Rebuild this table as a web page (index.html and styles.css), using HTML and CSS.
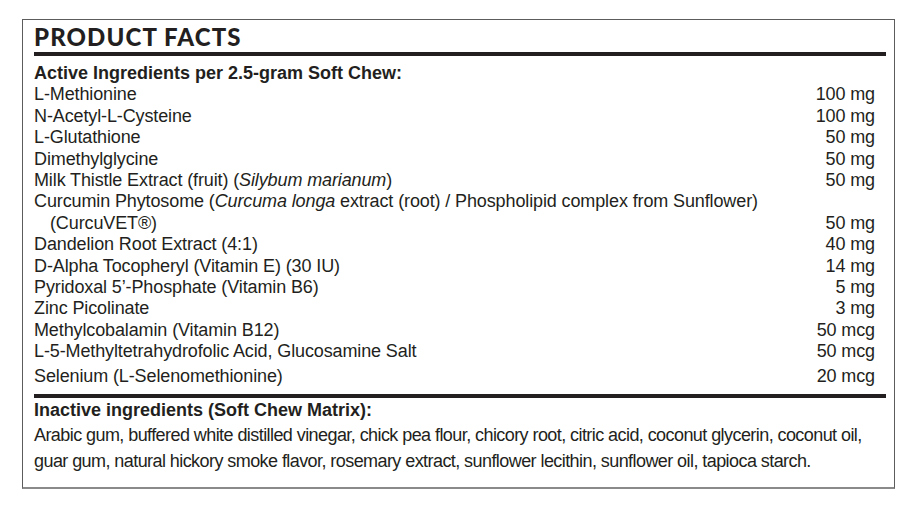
FILE: index.html
```html
<!DOCTYPE html>
<html lang="en">
<head>
<meta charset="utf-8">
<title>Product Facts</title>
<link rel="stylesheet" href="styles.css">
</head>
<body>
<div class="facts">
  <h1 class="facts-title">PRODUCT FACTS</h1>
  <section class="active">
    <h2 class="section-head">Active Ingredients per 2.5-gram Soft Chew:</h2>
    <ul class="ing-list">
      <li class="ing"><span class="name">L-Methionine</span><span class="amt">100 mg</span></li>
      <li class="ing"><span class="name">N-Acetyl-L-Cysteine</span><span class="amt">100 mg</span></li>
      <li class="ing"><span class="name">L-Glutathione</span><span class="amt">50 mg</span></li>
      <li class="ing"><span class="name">Dimethylglycine</span><span class="amt">50 mg</span></li>
      <li class="ing"><span class="name">Milk Thistle Extract (fruit) (<i>Silybum marianum</i>)</span><span class="amt">50 mg</span></li>
      <li class="ing"><span class="name wrap">Curcumin Phytosome (<i>Curcuma longa</i> extract (root) / Phospholipid complex from Sunflower)<br>(CurcuVET®)</span><span class="amt">50 mg</span></li>
      <li class="ing"><span class="name">Dandelion Root Extract (4:1)</span><span class="amt">40 mg</span></li>
      <li class="ing"><span class="name">D-Alpha Tocopheryl (Vitamin E) (30 IU)</span><span class="amt">14 mg</span></li>
      <li class="ing"><span class="name">Pyridoxal 5’-Phosphate (Vitamin B6)</span><span class="amt">5 mg</span></li>
      <li class="ing"><span class="name">Zinc Picolinate</span><span class="amt">3 mg</span></li>
      <li class="ing"><span class="name">Methylcobalamin (Vitamin B12)</span><span class="amt">50 mcg</span></li>
      <li class="ing"><span class="name">L-5-Methyltetrahydrofolic Acid, Glucosamine Salt</span><span class="amt">50 mcg</span></li>
      <li class="ing ing-last"><span class="name">Selenium (L-Selenomethionine)</span><span class="amt">20 mcg</span></li>
    </ul>
  </section>
  <section class="inactive">
    <h2 class="section-head">Inactive ingredients (Soft Chew Matrix):</h2>
    <p class="inactive-text">Arabic gum, buffered white distilled vinegar, chick pea flour, chicory root, citric acid, coconut glycerin, coconut oil,<br>guar gum, natural hickory smoke flavor, rosemary extract, sunflower lecithin, sunflower oil, tapioca starch.</p>
  </section>
</div>
</body>
</html>
```
FILE: styles.css
```css
html, body {
  margin: 0;
  padding: 0;
  background: #ffffff;
}

body {
  color: #231f20;
  font-family: "Liberation Sans", Arial, sans-serif;
}

.facts {
  box-sizing: border-box;
  width: 873px;
  margin: 19px 0 0 22px;
  padding: 3px 8px 13px 11px;
  border: 1px solid #5c5c5c;
  border-bottom: 2px solid #8a8a8a;
}

.facts-title {
  margin: 0;
  padding: 0 0 1px 0;
  font-family: Lato, "DejaVu Sans", sans-serif;
  font-weight: 900;
  font-size: 24px;
  line-height: 28px;
  letter-spacing: 1.1px;
  border-bottom: 4px solid #231f20;
}

.active {
  padding: 7px 0 6px 0;
}

.section-head {
  margin: 0;
  font-size: 18px;
  font-weight: 700;
  line-height: 21.4px;
}

.ing-list {
  list-style: none;
  margin: 0;
  padding: 0;
}

.ing {
  display: flex;
  justify-content: space-between;
  align-items: flex-end;
  font-size: 18px;
  line-height: 21.4px;
  letter-spacing: -0.12px;
}

.ing-last {
  margin-top: 3.6px;
}

.name.wrap {
  padding-left: 16px;
  text-indent: -16px;
}

.amt {
  padding-right: 11px;
  white-space: nowrap;
}

.inactive {
  border-top: 4px solid #231f20;
}

.inactive .section-head {
  line-height: 25.5px;
}

.inactive-text {
  margin: 0;
  font-size: 18px;
  line-height: 25.5px;
  letter-spacing: -0.57px;
  white-space: nowrap;
}
```
